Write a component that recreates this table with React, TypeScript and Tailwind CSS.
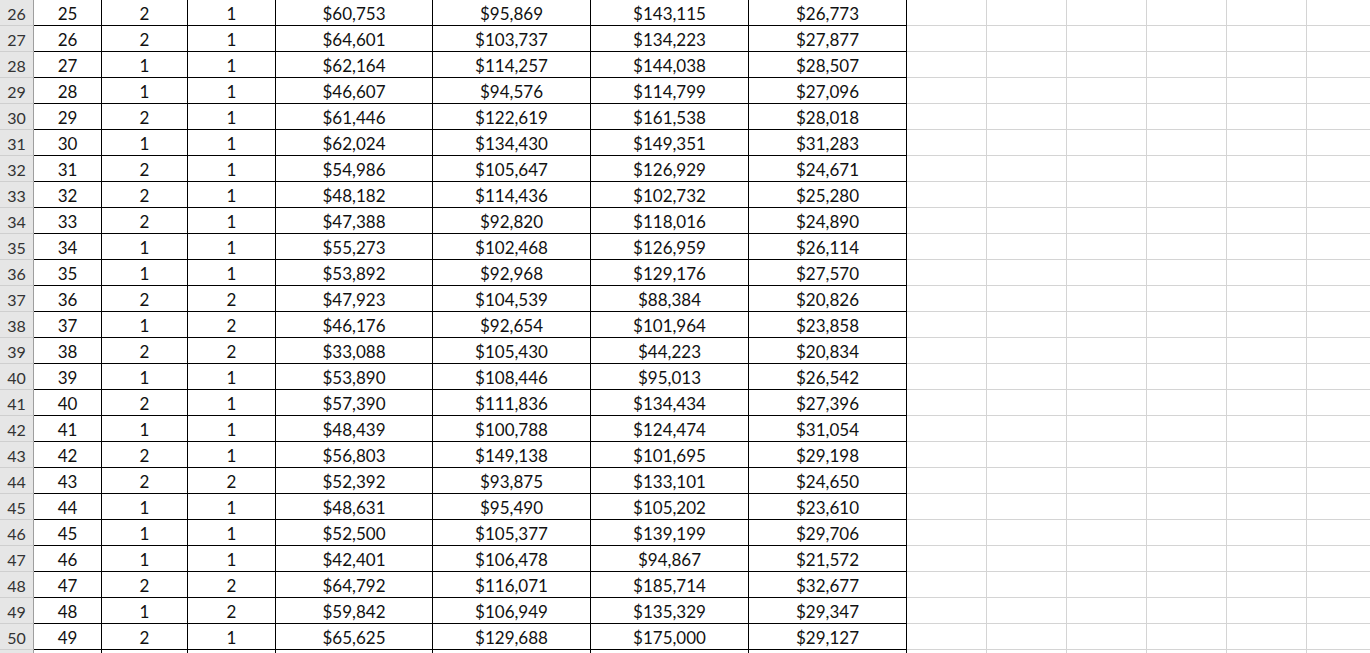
import React from 'react'

const ROWS: string[][] = [
  ['25', '2', '1', '$60,753', '$95,869', '$143,115', '$26,773'],
  ['26', '2', '1', '$64,601', '$103,737', '$134,223', '$27,877'],
  ['27', '1', '1', '$62,164', '$114,257', '$144,038', '$28,507'],
  ['28', '1', '1', '$46,607', '$94,576', '$114,799', '$27,096'],
  ['29', '2', '1', '$61,446', '$122,619', '$161,538', '$28,018'],
  ['30', '1', '1', '$62,024', '$134,430', '$149,351', '$31,283'],
  ['31', '2', '1', '$54,986', '$105,647', '$126,929', '$24,671'],
  ['32', '2', '1', '$48,182', '$114,436', '$102,732', '$25,280'],
  ['33', '2', '1', '$47,388', '$92,820', '$118,016', '$24,890'],
  ['34', '1', '1', '$55,273', '$102,468', '$126,959', '$26,114'],
  ['35', '1', '1', '$53,892', '$92,968', '$129,176', '$27,570'],
  ['36', '2', '2', '$47,923', '$104,539', '$88,384', '$20,826'],
  ['37', '1', '2', '$46,176', '$92,654', '$101,964', '$23,858'],
  ['38', '2', '2', '$33,088', '$105,430', '$44,223', '$20,834'],
  ['39', '1', '1', '$53,890', '$108,446', '$95,013', '$26,542'],
  ['40', '2', '1', '$57,390', '$111,836', '$134,434', '$27,396'],
  ['41', '1', '1', '$48,439', '$100,788', '$124,474', '$31,054'],
  ['42', '2', '1', '$56,803', '$149,138', '$101,695', '$29,198'],
  ['43', '2', '2', '$52,392', '$93,875', '$133,101', '$24,650'],
  ['44', '1', '1', '$48,631', '$95,490', '$105,202', '$23,610'],
  ['45', '1', '1', '$52,500', '$105,377', '$139,199', '$29,706'],
  ['46', '1', '1', '$42,401', '$106,478', '$94,867', '$21,572'],
  ['47', '2', '2', '$64,792', '$116,071', '$185,714', '$32,677'],
  ['48', '1', '2', '$59,842', '$106,949', '$135,329', '$29,347'],
  ['49', '2', '1', '$65,625', '$129,688', '$175,000', '$29,127'],
]

const EMPTY_COLS = 6

function Row({ n, cells }: { n?: number; cells: string[] }) {
  return (
    <>
      {/* Row header */}
      <div className="h-[26px] bg-[#e6e6e6] border-r border-b border-r-[#9e9e9e] border-b-[#cfcfcf] text-center text-[16px] text-[#333] pt-[3px] leading-[22px]">
        {n}
      </div>
      {cells.map((v, j) => (
        <div key={j} className="h-[26px] border-r border-b border-black text-center pt-[3px] leading-[22px] whitespace-nowrap">
          {v}
        </div>
      ))}
      {Array.from({ length: EMPTY_COLS }).map((_, k) => (
        <div key={'e' + k} className="h-[26px] border-r border-b border-[#d4d4d4]" />
      ))}
    </>
  )
}

export default function App() {
  return (
    <main className="w-[1370px] h-[653px] overflow-hidden bg-white font-['Lato',sans-serif] text-[17px] text-[#111]">
      <div className="grid grid-cols-[34px_68px_86px_88px_157px_158px_158px_158px_80px_80px_80px_80px_80px_80px] w-[1387px]">
        {ROWS.map((row, i) => (
          <Row key={i} n={26 + i} cells={row} />
        ))}
        {/* partially visible row below */}
        <Row cells={['', '', '', '', '', '', '']} />
      </div>
    </main>
  )
}
